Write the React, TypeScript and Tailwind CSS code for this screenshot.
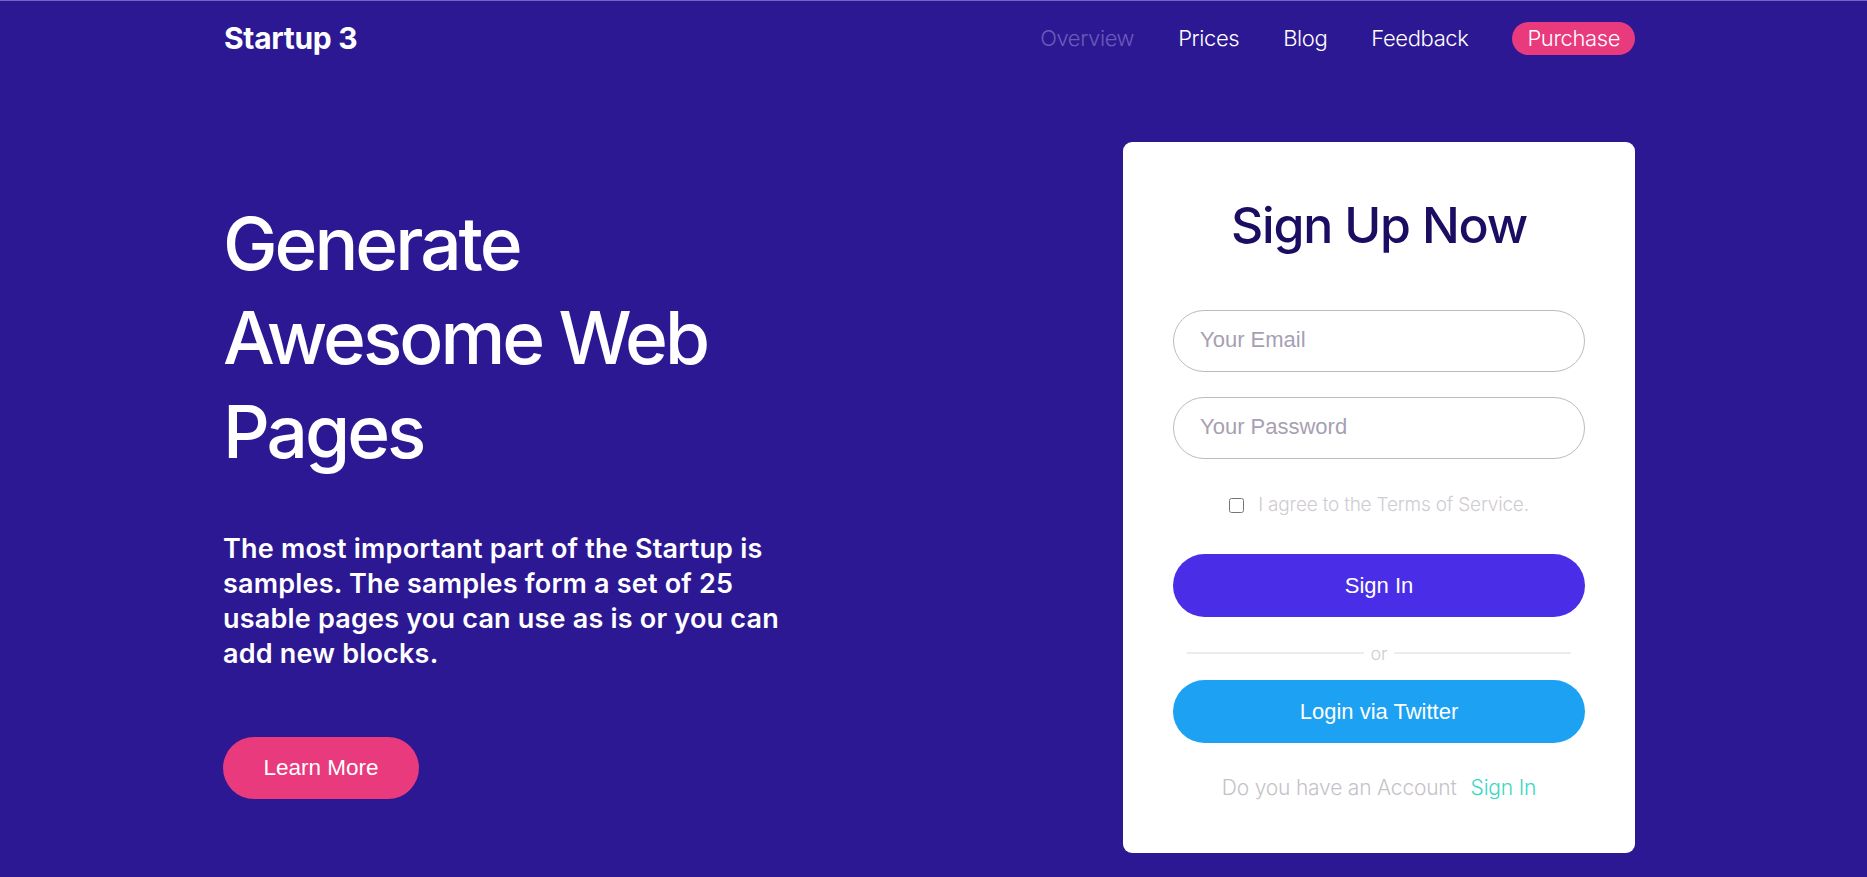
import React from "react";

const navLinks = ["Prices", "Blog", "Feedback"];

const App = () => {
  return (
    <div
      className="min-h-screen w-full bg-[#2d1893] border-t border-[#7b63c2] text-white"
      style={{ fontFamily: "Inter, 'Noto Sans', sans-serif" }}
    >
      <div className="ml-[223px] w-[1412px]">
        {/* navbar */}
        <nav className="flex items-center justify-between h-[74px]">
          <a className="text-[30px] font-bold tracking-[-0.3px] pl-[1px]">Startup 3</a>
          <div className="flex items-center text-[22px] font-light tracking-[-0.4px]">
            <a className="text-[#6b5bb8]">Overview</a>
            {navLinks.map((l) => (
              <a key={l} className="ml-[44px]">
                {l}
              </a>
            ))}
            <a className="ml-[44px] bg-[#e83a7c] rounded-full h-[33px] px-[15px] flex items-center justify-center">
              Purchase
            </a>
          </div>
        </nav>

        <div className="flex justify-between">
          {/* left side */}
          <div className="pt-[122px]">
            <h1 className="text-[73px] leading-[94px] font-medium tracking-[-3px]">
              Generate
              <br />
              Awesome Web
              <br />
              Pages
            </h1>
            <p className="mt-[52px] text-[27px] leading-[35px] font-semibold tracking-[0.2px]">
              The most important part of the Startup is
              <br />
              samples. The samples form a set of 25
              <br />
              usable pages you can use as is or you can
              <br />
              add new blocks.
            </p>
            <button
              className="mt-[66px] w-[196px] h-[62px] rounded-full bg-[#e83a7c] text-[22.5px] text-white"
              style={{ fontFamily: "'Liberation Sans', Arial, sans-serif" }}
            >
              Learn More
            </button>
          </div>

          {/* sign up card */}
          <div className="mt-[67px] w-[512px] bg-white rounded-[9px] px-[50px] pt-[52px] pb-[51px] mb-[24px]">
            <h2 className="text-center text-[50px] leading-[62px] font-medium tracking-[-1.2px] text-[#1c0d63]">
              Sign Up Now
            </h2>
            <div
              className="mt-[54px] flex flex-col gap-[25px]"
              style={{ fontFamily: "'Liberation Sans', Arial, sans-serif" }}
            >
              <input
                type="email"
                placeholder="Your Email"
                className="h-[62px] w-full rounded-[31px] border border-[#bcbcbc] pl-[26px] pb-[3px] text-[22px] text-[#333] placeholder:text-[#a79fb3] outline-none"
              />
              <input
                type="password"
                placeholder="Your Password"
                className="h-[62px] w-full rounded-[31px] border border-[#bcbcbc] pl-[26px] pb-[3px] text-[22px] text-[#333] placeholder:text-[#a79fb3] outline-none"
              />
            </div>
            <label className="mt-[34px] flex items-center justify-center h-[24px] text-[19px] font-light text-[#cfcbd3] tracking-[-0.2px]">
              <input type="checkbox" className="w-[15px] h-[15px] mr-[14px] accent-[#4a2de6]" />
              I agree to the Terms of Service.
            </label>
            <div style={{ fontFamily: "'Liberation Sans', Arial, sans-serif" }}>
              <button className="mt-[37px] w-full h-[63px] rounded-full bg-[#4a2de6] text-[22px] text-white">
                Sign In
              </button>
              <div className="mt-[25px] h-[22px] flex items-center px-[14px] gap-[6px]">
                <div className="flex-1 h-[2px] bg-[#ececec]" />
                <span className="text-[18px] text-[#cfcbd4] font-light" style={{ fontFamily: "Inter, sans-serif" }}>
                  or
                </span>
                <div className="flex-1 h-[2px] bg-[#ececec]" />
              </div>
              <button className="mt-[16px] w-full h-[63px] rounded-full bg-[#1da1f2] text-[22px] text-white">
                Login via Twitter
              </button>
            </div>
            <p className="mt-[31px] h-[28px] flex items-center justify-center text-[21px] font-light tracking-[-0.2px]">
              <span className="text-[#c6c2ca]">Do you have an Account</span>
              <a className="ml-[14px] text-[#3bd6c4]">Sign In</a>
            </p>
          </div>
        </div>
      </div>
    </div>
  );
};

export default App;
